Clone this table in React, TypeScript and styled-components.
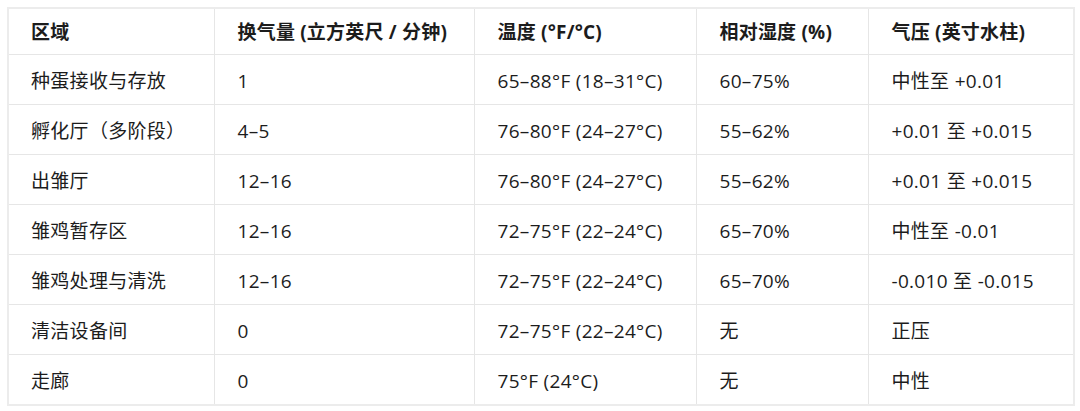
import React from 'react';
import styled, { createGlobalStyle } from 'styled-components';

const COLUMNS = [
  { title: '区域', width: 206 },
  { title: '换气量 (立方英尺 / 分钟)', width: 260 },
  { title: '温度 (°F/°C)', width: 222 },
  { title: '相对湿度 (%)', width: 172 },
  { title: '气压 (英寸水柱)', width: 206 },
];

const ROWS = [
  ['种蛋接收与存放', '1', '65–88°F (18–31°C)', '60–75%', '中性至 +0.01'],
  ['孵化厅（多阶段）', '4–5', '76–80°F (24–27°C)', '55–62%', '+0.01 至 +0.015'],
  ['出雏厅', '12–16', '76–80°F (24–27°C)', '55–62%', '+0.01 至 +0.015'],
  ['雏鸡暂存区', '12–16', '72–75°F (22–24°C)', '65–70%', '中性至 -0.01'],
  ['雏鸡处理与清洗', '12–16', '72–75°F (22–24°C)', '65–70%', '-0.010 至 -0.015'],
  ['清洁设备间', '0', '72–75°F (22–24°C)', '无', '正压'],
  ['走廊', '0', '75°F (24°C)', '无', '中性'],
];

const GlobalStyle = createGlobalStyle`
  html, body {
    margin: 0;
    background: #ffffff;
  }
  body {
    font-family: "Open Sans", "Noto Sans CJK SC", sans-serif;
    color: #1c1c1c;
  }
`;

export default function App() {
  return (
    <>
      <GlobalStyle />
      <Page>
        <Table>
          <colgroup>
            {COLUMNS.map((c) => (
              <col key={c.title} style={{ width: c.width }} />
            ))}
          </colgroup>
          <thead>
            <tr>
              {COLUMNS.map((c) => (
                <HeadCell key={c.title}>{c.title}</HeadCell>
              ))}
            </tr>
          </thead>
          <tbody>
            {ROWS.map((row, i) => (
              <tr key={i}>
                {row.map((cell, j) => (
                  <Cell key={j}>{cell}</Cell>
                ))}
              </tr>
            ))}
          </tbody>
        </Table>
      </Page>
    </>
  );
}

const Page = styled.div`
  padding: 7px;
`;

const Table = styled.table`
  width: 1066px;
  table-layout: fixed;
  border-collapse: collapse;
  border: 2px solid #ececec;
  font-size: 19px;
  line-height: 26px;
`;

const HeadCell = styled.th`
  height: 45px;
  padding: 0 0 0 23px;
  text-align: left;
  font-weight: 700;
  border: 1px solid #e6e6e6;
  white-space: nowrap;
  letter-spacing: 0.2px;

  &:first-child {
    padding-left: 22px;
  }
`;

const Cell = styled.td`
  height: 47px;
  padding: 2px 0 0 23px;
  text-align: left;
  font-weight: 400;
  border: 1px solid #e6e6e6;
  white-space: nowrap;
  letter-spacing: 0.3px;

  &:first-child {
    padding-left: 22px;
  }
`;
